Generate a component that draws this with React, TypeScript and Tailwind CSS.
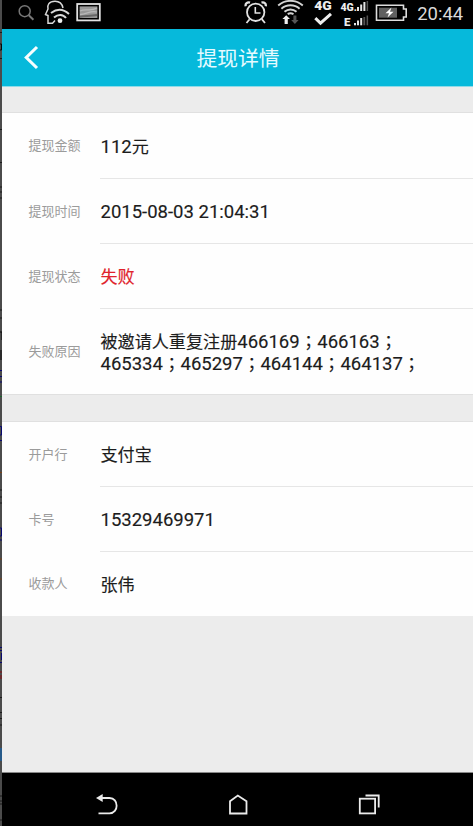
import React from "react";

type Item = { label: string; value: string; tone?: string; height: string };

const withdrawal: Item[] = [
  { label: "提现金额", value: "112元", height: "h-[66px]" },
  { label: "提现时间", value: "2015-08-03 21:04:31", height: "h-[65px]" },
  { label: "提现状态", value: "失败", tone: "text-[#e0232b]", height: "h-[65px]" },
  { label: "失败原因", value: "被邀请人重复注册466169；466163；\n465334；465297；464144；464137；", height: "h-[85px]" },
];

const account: Item[] = [
  { label: "开户行", value: "支付宝", height: "h-[65px]" },
  { label: "卡号", value: "15329469971", height: "h-[65px]" },
  { label: "收款人", value: "张伟", height: "h-[64px]" },
];

// Digits are set slightly larger than the Chinese glyphs beside them.
function MixedText({ text }: { text: string }) {
  return (
    <>
      {text.split(/([\u4e00-\u9fff]+|；)/).map((part, i) =>
        part === "；" ? (
          <span key={i} className="inline-block w-[17.6px] text-center align-baseline font-['Noto_Sans_CJK_TC',sans-serif] text-[17.1px] leading-none">
            ；
          </span>
        ) : /[\u4e00-\u9fff]/.test(part) ? (
          <span key={i} className="text-[17.1px] leading-none">{part}</span>
        ) : (
          <span key={i}>{part}</span>
        )
      )}
    </>
  );
}

function Group({ items }: { items: Item[] }) {
  return (
    <section className="bg-[#fefefe]">
      {items.map((it, i) => (
        <div key={it.label} className={`flex ${it.height}`}>
          <div className="flex w-[98px] shrink-0 items-center pl-[26.5px] text-[13px] text-[#9b9b9b]">{it.label}</div>
          <div
            className={`flex flex-1 items-center border-[#e6e6e6] pl-[0.5px] pt-[2px] text-[18.5px] leading-[22px] ${
              i < items.length - 1 ? "border-b" : ""
            } ${it.tone ?? "text-[#1c1c1c]"}`}
          >
            <div className="whitespace-pre">
              {it.value.split("\n").map((line) => (
                <div key={line} className="h-[22px] [-webkit-text-stroke:0.15px]">
                  <MixedText text={line} />
                </div>
              ))}
            </div>
          </div>
        </div>
      ))}
    </section>
  );
}

function StatusIcons() {
  return (
    <svg width="471" height="29" viewBox="2 0 471 29" fill="none" className="block">
      <g stroke="#777" strokeWidth="1.5">
        <circle cx="24.7" cy="11.2" r="5.5" />
        <path d="M28.8 15.3l4.6 4.4" strokeWidth="2" />
      </g>
      <g stroke="#d8d8d8" strokeWidth="1.5">
        <path d="M63 8C62 3 59 1.3 55 1.3C49 1.3 47 5 48 9L45.5 14.5L48 15.5L48 20V23.2H52.5L55 20.5" />
        <path d="M51 13C57 8.5 63 8.5 69 14M54 17.5C58 14 63 14 66 18" strokeWidth="2" />
        <circle cx="60" cy="20.7" r="2.4" fill="#eee" stroke="none" />
      </g>
      <rect x="77.2" y="4" width="22.6" height="16.4" stroke="#e2e2e2" strokeWidth="1.8" />
      <rect x="79.6" y="6.4" width="17.8" height="11.6" fill="#989898" />
      <path d="M80 11C86 8 90 12 97 8M80 14.5C87 14 91 10 97 12" stroke="#b8b8b8" strokeWidth="1.3" />
      <path d="M80 16.8C87 16 91 16 97 15" stroke="#666" strokeWidth="2" />

      <g stroke="#e2e2e2" strokeWidth="1.8">
        <circle cx="255.7" cy="12.3" r="8.7" />
        <path d="M255.3 7V13H260.5" strokeWidth="1.6" />
        <path d="M245.7 6.2C245 3.5 247.4 1.7 250 2.6M261.5 2.6C264 1.7 266.4 3.5 265.7 6.2" strokeWidth="2.3" />
        <path d="M249.6 19.2L246.5 23M261.8 19.2L265 23" />
      </g>
      <g stroke="#d4d4d4" strokeWidth="1.9">
        <path d="M278.2 5.5C285.3-.7 295.7-.7 302.8 5.5M281.4 8.7C286.6 4.1 294.4 4.1 299.6 8.7M284.5 11.8C288 8.7 293 8.7 296.5 11.8" />
        <path d="M287.7 14.1Q290.5 12.4 293.5 14.1" />
      </g>
      <path d="M286.2 15.3L290 19H287.8V24H284.6V19H282.4Z" fill="#eee" />
      <path d="M293.4 15.5H296.4V20H298.6L294.9 24L291.2 20H293.4Z" fill="#555" />
      <path d="M315.3 18.2L320.5 23.2L331 13.8" stroke="#ededed" strokeWidth="3" />
      <g fontFamily="Roboto, sans-serif" fontWeight="900" fill="#ededed">
        <text x="314.3" y="9.8" fontSize="13.5" textLength="17.5" lengthAdjust="spacingAndGlyphs">4G</text>
        <text x="340.5" y="11.2" fontSize="11" textLength="16.5" lengthAdjust="spacingAndGlyphs">4G.</text>
        <text x="344" y="25.5" fontSize="11.5">E</text>
      </g>
      <g fill="#e4e4e4">
        <rect x="357" y="7" width="2" height="4" />
        <rect x="360.2" y="4.5" width="2" height="6.5" />
        <rect x="363.4" y="2" width="2" height="9" />
        <rect x="354" y="23" width="2" height="2.3" />
        <rect x="357" y="20.5" width="2" height="4.8" />
        <rect x="360.2" y="18" width="2" height="7.3" />
      </g>
      <g fill="#555">
        <rect x="366.6" y="1" width="1.5" height="10" />
        <rect x="363.4" y="17" width="1.8" height="8.3" />
        <rect x="366.6" y="15.5" width="1.5" height="9.8" />
      </g>
      <path d="M376.5 5.2H403.5V9H406.2V17H403.5V20.3H376.5Z" stroke="#ddd" strokeWidth="1.6" />
      <rect x="379" y="7.7" width="18" height="10" fill="#606060" />
      <path d="M391.5 7.5L385.5 13.2H389L387.5 17.5L393.5 11.8H390Z" fill="#fff" />
      <text x="417.2" y="19.6" fontFamily="Roboto, sans-serif" fontSize="19" fill="#dadada" textLength="46" lengthAdjust="spacingAndGlyphs">20:44</text>
    </svg>
  );
}

// Sliver of the darkened page visible behind the phone screen.
function BackdropEdge() {
  return (
    <svg width="2" height="826" viewBox="0 0 2 826" className="block shrink-0 bg-[#4b4b4b]">
      <path d="M0 32.5H2M0 58.5H2M0 129.5H2M0 162.5H2M0 187H2M0 192H2M0 198H2M0 310H2M0 318H2M0 490H2M0 497H2M0 503H2M0 697.5H2M0 712.5H2M0 718.5H2M0 725H2M0 796H2M0 801H2M0 804H2M0 820H2" stroke="#1b1b1b" />
      <path d="M0 44H1.5V50H0M0 332H2V340M1 350V360" stroke="#080808" fill="none" />
      <path d="M0 370.5H2M0 376.5H2M0 382H2M0 426.5H1.5V435H0M0 440.5H2M0 528H1.5V536H0M0 540H2M0 647.5H2M0 650.5H2M1.5 653V660M0 662.5H2" stroke="#080870" fill="none" />
      <path d="M0 396.5H2" stroke="#17662b" />
      <path d="M0 472.5H2M0 559H2M0 579H2" stroke="#754019" />
      <path d="M0 672H2M1 675V679" stroke="#880d12" />
      <path d="M1 748V761" stroke="#1762a5" strokeWidth="1.4" />
    </svg>
  );
}

export default function App() {
  return (
    <div className="flex h-[826px] w-[473px] overflow-hidden bg-[#ececec] font-['Roboto','Noto_Sans_CJK_SC',sans-serif]">
      <BackdropEdge />
      <div className="flex min-w-0 flex-1 flex-col">
        <div className="h-[29px] shrink-0 bg-black">
          <StatusIcons />
        </div>
        <header className="grid h-[58px] shrink-0 grid-cols-[60px_1fr_60px] items-center border-b border-[#8fdbe8] bg-[#06b9db]">
          <svg width="60" height="57" viewBox="2 29 60 57" fill="none">
            <path d="M37 47L26.3 57.5L37 68" stroke="#f7feff" strokeWidth="3.1" />
          </svg>
          <h1 className="pl-px pt-[3px] text-center text-[20.8px] leading-none text-[#e6fbff]">提现详情</h1>
        </header>
        <div className="h-[26px] shrink-0 border-b border-[#e0e0e0]" />
        <Group items={withdrawal} />
        <div className="h-[28px] shrink-0 border-y border-[#e0e0e0]" />
        <Group items={account} />
        <div className="flex-1" />
        <nav className="h-[54px] shrink-0 border-t border-[#888] bg-black">
          <svg width="471" height="53" viewBox="2 773 471 53" fill="none" stroke="#ebebeb" strokeWidth="1.8" className="block">
            <path d="M101 798H109.5C119 798 119 813.3 109.5 813.3H98.5" />
            <path d="M96 798L102.7 794V802Z" fill="#ebebeb" stroke="none" />
            <path d="M230 813.5V801.3L237.8 795.5L246.5 801.3V813.5Z" />
            <rect x="359.8" y="798.7" width="15.3" height="14.7" />
            <path d="M365.5 795.5H378.7V807.5" />
          </svg>
        </nav>
      </div>
    </div>
  );
}
